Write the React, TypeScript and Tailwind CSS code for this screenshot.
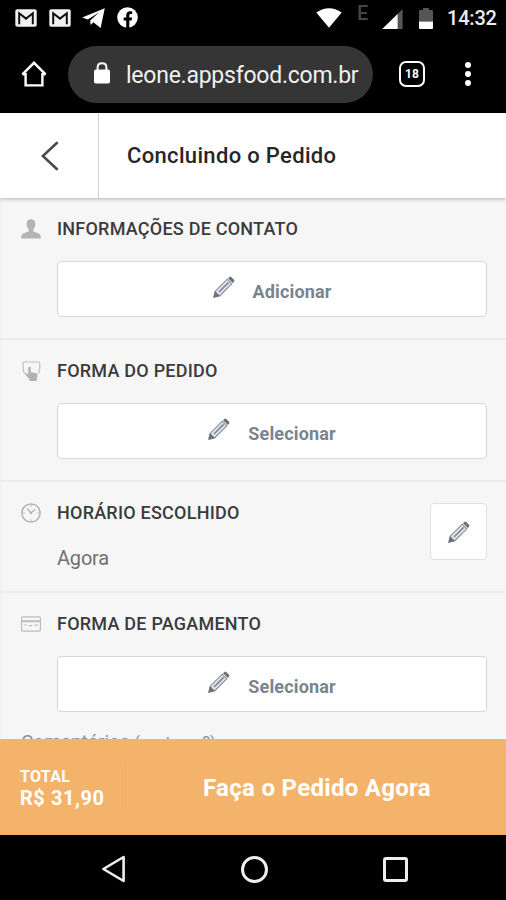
import React from 'react'
import clsx from 'clsx'

const Pencil: React.FC<{ className?: string }> = ({ className }) => (
  <svg viewBox="0 0 22 22" className={clsx('size-[22px] shrink-0', className)} fill="none">
    <path d="M0.8 21.2 L2 15.4 L14.2 3.2 L18.8 7.8 L6.6 20 Z" fill="#dfe3e9" stroke="#848b96" strokeWidth="1.1" />
    <path d="M0.5 21.5 L2 15.4 Q3.6 15.4 4.2 17.6 Q6.3 18.2 6.6 20 Z" fill="#6a717b" />
    <path d="M6 16 L15.6 6.4" stroke="#7d8590" strokeWidth="1.5" />
    <path d="M15 2.2 L16.3 0.9 Q17.2 0.1 18.2 1 L21 3.8 Q21.9 4.8 21 5.7 L19.8 7 Z" fill="#6a717b" />
  </svg>
)

const PersonIcon = () => (
  <svg viewBox="0 0 20 20" className="size-5" fill="#b3b3b3">
    <path d="M10 0.3 C12.8 0.3 14.3 2.1 14.3 5 C14.3 7.4 13.6 9 12.3 10.2 V12.2 C13.2 13.3 19.8 13.6 19.8 18 V19.6 H0.2 V18 C0.2 13.6 6.8 13.3 7.7 12.2 V10.2 C6.4 9 5.7 7.4 5.7 5 C5.7 2.1 7.2 0.3 10 0.3 Z" />
  </svg>
)

const TapIcon = () => (
  <svg viewBox="0 0 20 20" className="size-5" fill="none">
    <path d="M5 12.2 H4.2 Q2.6 12.2 2.6 10.4 V8.6 Q2 8.4 2 7 V2.2 Q2 1 3.2 1 H17.6 Q18.8 1 18.8 2.2 V7 Q18.8 8.4 18.2 8.6 V10.4 Q18.2 12.2 16.6 12.2" stroke="#bfbfbf" strokeWidth="1.2" />
    <path d="M7.2 6.3 Q8.6 5.2 9.8 6.3 V11 L15.2 12.2 Q16.8 12.6 16.6 14 L15.9 17.4 V19.9 H8.3 V17.8 L4.4 13.8 Q4 12.6 5.4 12.3 L7.2 13.3 Z" fill="#b3b3b3" />
  </svg>
)

const ClockIcon = () => (
  <svg viewBox="0 0 20 20" className="size-5" fill="none" stroke="#b3b3b3">
    <circle cx="10" cy="10" r="9.1" strokeWidth="1.5" />
    <path d="M10 1.8 V4 M10 16 V18.2 M1.8 10 H4 M16 10 H18.2" strokeWidth="0.8" />
    <path d="M6.2 5.6 L10 10 L14.2 6.2" strokeWidth="1.4" />
    <circle cx="10" cy="10" r="0.8" fill="#b3b3b3" />
  </svg>
)

const CardIcon = () => (
  <svg viewBox="0 0 20 20" className="size-5" fill="none" stroke="#bcbcbc">
    <rect x="0.6" y="2.8" width="18.8" height="14.4" rx="1.4" strokeWidth="1.2" />
    <path d="M0.6 7.2 H19.4" strokeWidth="2" />
    <path d="M3.2 11 H6 M7.6 11.6 H11.2 M13.4 11.2 H17" strokeWidth="1.2" />
  </svg>
)

const MailIcon = () => (
  <svg viewBox="0 0 22 18" className="h-[18px] w-[22px]">
    <rect x="0.3" y="0.3" width="21.4" height="17.4" rx="2" fill="#f1f1f1" />
    <path d="M4.2 15.2 V4.2 L11 9.6 L17.8 4.2 V15.2" fill="none" stroke="#111" strokeWidth="2" />
  </svg>
)

const StatusBar = () => (
  <div className="flex h-9 items-center pl-[15px] pr-[9px]">
    <MailIcon />
    <div className="ml-3">
      <MailIcon />
    </div>
    <svg viewBox="0 0 23 20" className="ml-[11px] h-5 w-[23px]" fill="#fff">
      <path d="M22.8 0.2 L0.2 9.4 L5.8 11.5 L17 4.6 L8.2 12.5 L8.6 17 L11.4 14.3 L18.6 20 Z" />
    </svg>
    <svg viewBox="0 0 21 21" className="-mt-px ml-3 size-[21px]">
      <circle cx="10.5" cy="10.5" r="10.3" fill="#fff" />
      <path d="M9.2 21 V13.6 H6.6 V10.6 H9.2 V8.4 C9.2 5.6 10.8 4.2 13.2 4.2 H15.2 V6.9 H13.8 C12.7 6.9 12.3 7.5 12.3 8.5 V10.6 H15.1 L14.6 13.6 H12.3 V21 Z" fill="#000" />
    </svg>

    <svg viewBox="0 0 26 20" className="-mt-px ml-auto h-5 w-[26px]" fill="#fff">
      <path d="M0.3 4.6 Q13 -4 25.7 4.6 L13 19.7 Z" />
    </svg>
    <span className="ml-[15px] w-[13px] pb-[11px] text-[20px] leading-none font-medium text-[#454545]">E</span>
    <svg viewBox="0 0 21 20" className="mt-px ml-[12px] h-5 w-[21px]">
      <path d="M20.6 0 V20 H0.3 Z" fill="#555" />
      <path d="M15.6 5 V20 H0.3 Z" fill="#fff" />
    </svg>
    <svg viewBox="0 0 14 21" className="ml-4 h-[21px] w-[14px]">
      <path d="M4 0 H10 V2 H13 Q14 2 14 3 V13.4 H0 V3 Q0 2 1 2 H4 Z" fill="#555" />
      <path d="M0 13.4 H14 V20 Q14 21 13 21 H1 Q0 21 0 20 Z" fill="#fff" />
    </svg>
    <span className="ml-[14px] w-[50px] text-[20px] leading-none font-medium tracking-[-0.2px] whitespace-nowrap text-[#ececec]">
      14:32
    </span>
  </div>
)

const BrowserBar = () => (
  <div className="flex h-[77px] items-center pl-[21px]">
    <svg viewBox="0 0 26 26" className="-mt-px size-[26px]" fill="none" stroke="#fff" strokeWidth="2.4">
      <path d="M4.6 12 V24.4 H21.4 V12 M1.4 13.4 L13 1.8 L24.6 13.4 M1.4 13.4 H4.6 M24.6 13.4 H21.4" />
    </svg>
    <div className="ml-[21px] flex h-[57px] w-[305px] items-center rounded-full bg-[#353535] pl-[26px]">
      <svg viewBox="0 0 16 22" className="-mt-[3px] h-[22px] w-4">
        <path d="M3.6 9 V5.6 Q3.6 1.3 8 1.3 Q12.4 1.3 12.4 5.6 V9" fill="none" stroke="#fff" strokeWidth="2" />
        <rect x="0" y="7.6" width="16" height="14" rx="1.8" fill="#fff" />
      </svg>
      <span className="ml-4 pt-px text-[23px] leading-none tracking-[-0.24px] whitespace-nowrap text-[#f0f0f0]">
        leone.appsfood.com.br
      </span>
    </div>
    <div className="-mt-[2px] ml-[26px] flex size-[26px] items-center justify-center rounded-[7px] border-[2.5px] border-white text-[12px] leading-none font-bold text-white">
      18
    </div>
    <div className="-mt-[2px] ml-[40px] flex flex-col gap-[3px]">
      <i className="size-[6px] rounded-full bg-white" />
      <i className="size-[6px] rounded-full bg-white" />
      <i className="size-[6px] rounded-full bg-white" />
    </div>
  </div>
)

const Header = () => (
  <header className="relative flex h-[85px] shrink-0 items-center bg-white shadow-[0_1px_4px_rgba(0,0,0,0.28)]">
    <div className="flex h-full w-[99px] items-center border-r border-[#d2d2d2] pl-[41px]">
      <svg viewBox="0 0 18 30" className="h-[30px] w-[18px]" fill="none" stroke="#4a4a4a" strokeWidth="2.6">
        <path d="M16.6 1.2 L1.8 15 L16.6 28.8" />
      </svg>
    </div>
    <h1 className="ml-7 text-[22px] leading-none font-medium tracking-[0.33px] whitespace-nowrap text-[#262626]">
      Concluindo o Pedido
    </h1>
  </header>
)

type SectionProps = {
  icon: React.ReactNode
  title: string
  className?: string
  children: React.ReactNode
}

const Section: React.FC<SectionProps> = ({ icon, title, className, children }) => (
  <section className={clsx('flex shrink-0 pr-[19px] pl-[21px]', className)}>
    <div className="mt-[21px] w-9">{icon}</div>
    <div className="flex-1 pt-[21px]">
      <h2 className="text-[18px] leading-5 font-medium tracking-[0.23px] whitespace-nowrap text-[#3b3b3b]">{title}</h2>
      {children}
    </div>
  </section>
)

const ActionButton: React.FC<{ label: string }> = ({ label }) => (
  <button className="mt-[22px] flex h-14 w-full items-center justify-center rounded-[4px] border-[1.5px] border-[#d5d9db] bg-white">
    <Pencil className="mb-1" />
    <span className="ml-[18px] pt-[5px] text-[18px] leading-none font-bold tracking-[0.15px] text-[#7a838f]">{label}</span>
  </button>
)

const Footer = () => (
  <footer className="relative flex h-24 shrink-0 items-center bg-[#f4b36a] text-white">
    <div className="flex h-12 w-[126px] flex-col justify-center border-r border-[#efae66] pl-5 font-bold whitespace-nowrap">
      <span className="text-[16px] leading-[21px] tracking-[0.3px]">TOTAL</span>
      <span className="text-[20px] leading-[22px] tracking-[0.55px]">R$ 31,90</span>
    </div>
    <button className="flex-1 pt-[2px] pl-[2px] text-center text-[24px] leading-none font-bold tracking-[0.3px] whitespace-nowrap">
      Faça o Pedido Agora
    </button>
  </footer>
)

const NavBar = () => (
  <nav className="flex h-[65px] shrink-0 items-center bg-black pt-[3px] pl-[101px]">
    <svg viewBox="0 0 25 28" className="h-7 w-[25px]" fill="none" stroke="#eee" strokeWidth="2.6" strokeLinejoin="round">
      <path d="M22.6 2 V26 L2.4 14 Z" />
    </svg>
    <div className="ml-[115px] size-[27px] rounded-full border-[3px] border-[#eee]" />
    <div className="ml-[115px] size-[25px] rounded-[3px] border-[3px] border-[#eee]" />
  </nav>
)

const App: React.FC = () => {
  return (
    <div className="flex h-[900px] w-[506px] flex-col overflow-hidden bg-[#f6f6f6] font-['Roboto',sans-serif]">
      <div className="h-[113px] shrink-0 bg-black">
        <StatusBar />
        <BrowserBar />
      </div>
      <Header />
      <main className="flex h-[541px] shrink-0 flex-col border-l-2 border-[#f1f1f1] [&>section]:-ml-[2px]">
        <Section icon={<PersonIcon />} title="INFORMAÇÕES DE CONTATO" className="h-[142px] border-b-2 border-[#ececec]">
          <ActionButton label="Adicionar" />
        </Section>
        <Section icon={<TapIcon />} title="FORMA DO PEDIDO" className="h-[142px] border-b-2 border-[#ececec]">
          <ActionButton label="Selecionar" />
        </Section>
        <Section icon={<ClockIcon />} title="HORÁRIO ESCOLHIDO" className="h-[111px] border-b-2 border-[#ececec]">
          <div className="flex justify-between">
            <p className="mt-[23px] text-[20px] leading-6 tracking-[-0.2px] text-[#707070]">Agora</p>
            <button className="-mt-[20px] flex size-[57px] items-center justify-center rounded-[4px] border-[1.5px] border-[#dfe0e2] bg-white">
              <Pencil />
            </button>
          </div>
        </Section>
        <Section icon={<CardIcon />} title="FORMA DE PAGAMENTO" className="h-[122px]">
          <ActionButton label="Selecionar" />
        </Section>
        <p className="mt-[15px] ml-[19px] text-[19px] leading-6 whitespace-nowrap text-[#8d8d8d]">
          Comentários <span className="text-[16px]">(e o troco?)</span>
        </p>
      </main>
      <Footer />
      <NavBar />
    </div>
  )
}

export default App
